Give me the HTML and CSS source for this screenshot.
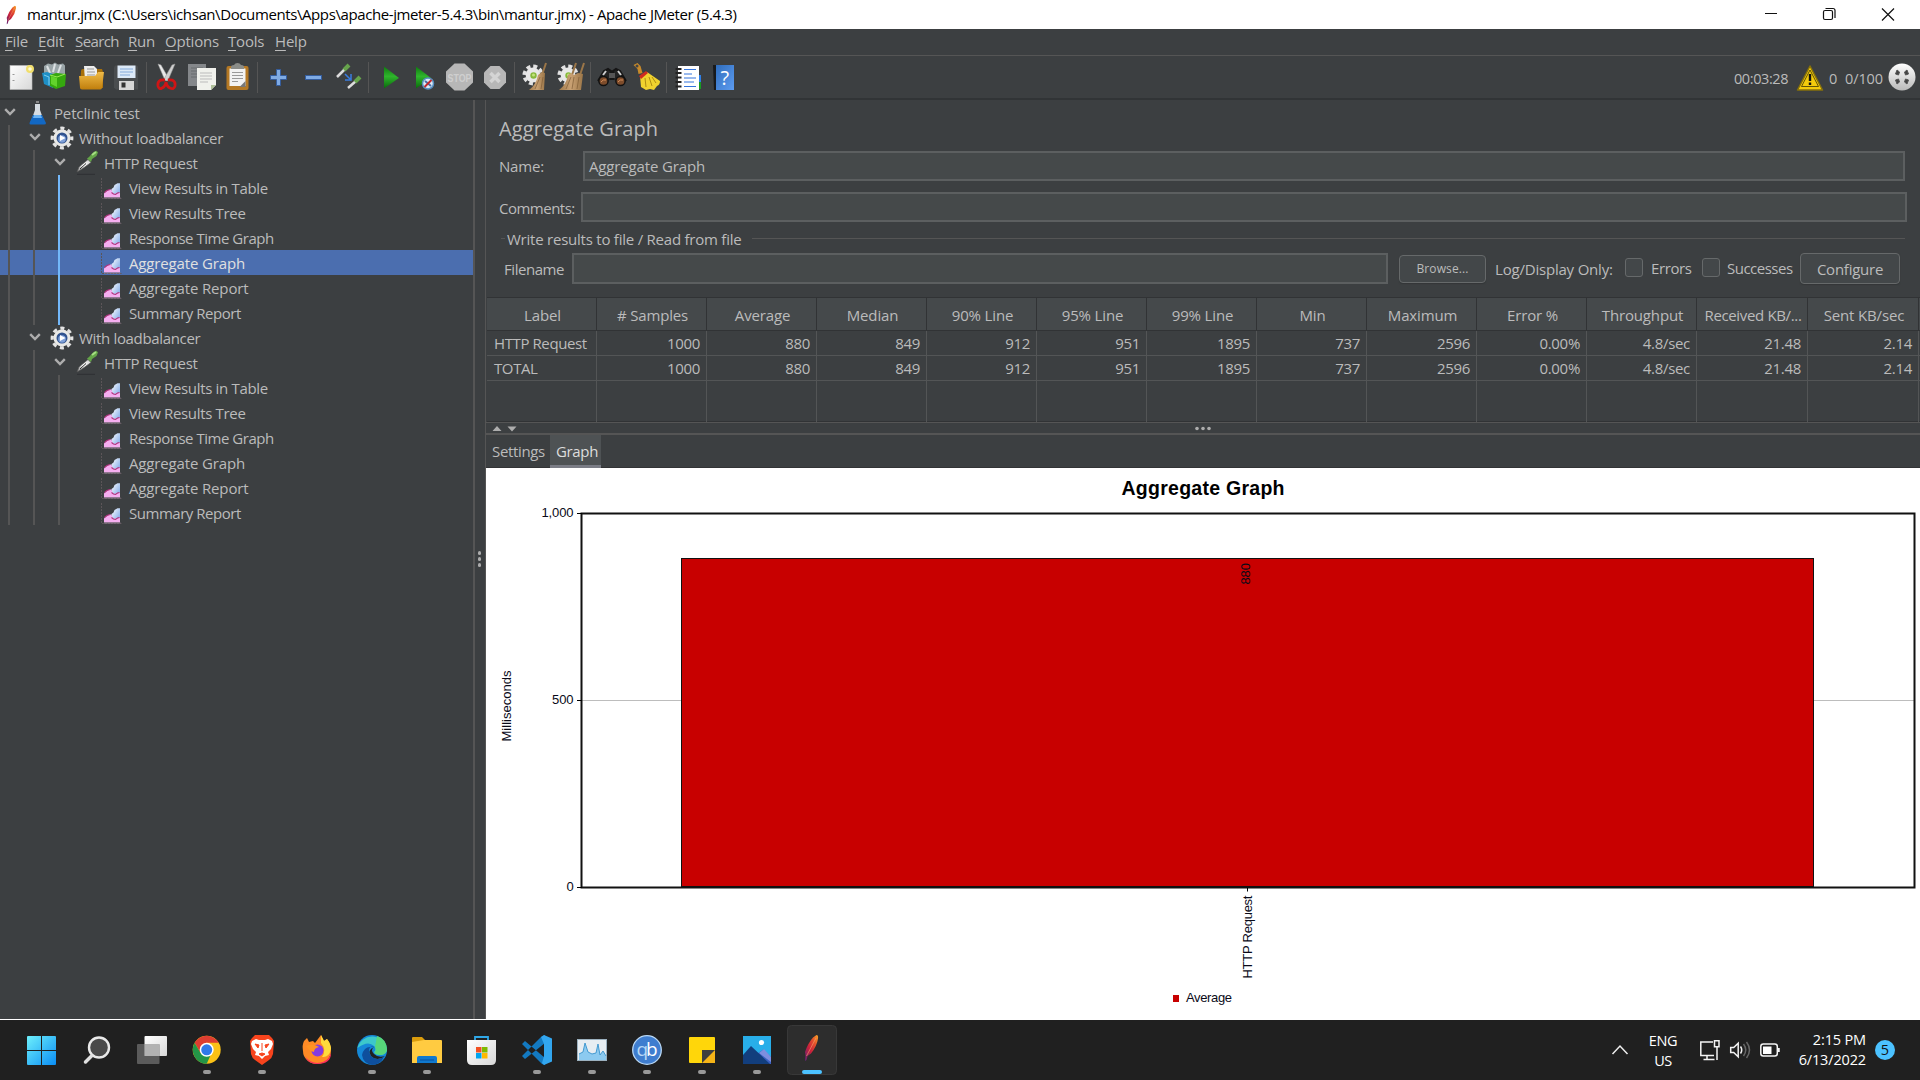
FILE: index.html
```html
<!DOCTYPE html>
<html lang="en">
<head>
<meta charset="utf-8">
<title>Apache JMeter</title>
<link rel="stylesheet" href="styles.css">
</head>
<body>
<svg class="defs" width="0" height="0">
  <defs>
    <linearGradient id="blueGrad" x1="0" y1="0" x2="1" y2="1"><stop offset="0" stop-color="#6ef0fb"/><stop offset="1" stop-color="#0a8df5"/></linearGradient>
    <linearGradient id="paper" x1="0" y1="0" x2="1" y2="1"><stop offset="0" stop-color="#fff"/><stop offset="1" stop-color="#d8d8d8"/></linearGradient>
    <linearGradient id="gold" x1="0" y1="0" x2="0" y2="1"><stop offset="0" stop-color="#f0bb48"/><stop offset="1" stop-color="#c07e0c"/></linearGradient>
    <linearGradient id="play" x1="0" y1="0" x2="0" y2="1"><stop offset="0" stop-color="#0f7a10"/><stop offset=".45" stop-color="#2fb52c"/><stop offset="1" stop-color="#0a6a0c"/></linearGradient>
    <linearGradient id="feather" x1="1" y1="0" x2="0" y2="1"><stop offset="0" stop-color="#f8a526"/><stop offset=".3" stop-color="#e4502c"/><stop offset=".6" stop-color="#c8203c"/><stop offset="1" stop-color="#5e2378"/></linearGradient>
    <linearGradient id="pipe" x1="0" y1="1" x2="1" y2="0"><stop offset="0" stop-color="#777"/><stop offset=".5" stop-color="#fff"/><stop offset="1" stop-color="#ccc"/></linearGradient>
    <linearGradient id="straw" x1="0" y1="0" x2="1" y2="0"><stop offset="0" stop-color="#a07a4c"/><stop offset=".5" stop-color="#c9a173"/><stop offset="1" stop-color="#9b7648"/></linearGradient>
    <linearGradient id="book" x1="0" y1="0" x2="1" y2="1"><stop offset="0" stop-color="#2f6dbd"/><stop offset="1" stop-color="#5d9cf0"/></linearGradient>
    <linearGradient id="ball" x1="0" y1="0" x2="0" y2="1"><stop offset="0" stop-color="#fff"/><stop offset="1" stop-color="#b9b9b9"/></linearGradient>
    <linearGradient id="area" x1="0" y1="0" x2="1" y2="1"><stop offset="0" stop-color="#fff"/><stop offset="1" stop-color="#6f9fe6"/></linearGradient>
    <symbol id="arrow" viewBox="0 0 12 25"><path d="M1.2 9.2 6 14 10.8 9.2" fill="none" stroke="#adadad" stroke-width="2.4"/></symbol>
    <symbol id="leaf" viewBox="0 0 21 25">
      <path d="M.5 3v20.500h20" fill="none" stroke="#5b5558" stroke-dasharray="2 1"/>
      <path d="M10.500 20v-6l2-1.500 1-2.500 3-1.800h2.500V22z" fill="url(#area)"/>
      <path d="M3 22.500v-4l2.500-2.500 3-1.500h2l1 3.500 2 1.500 2-2 1 1 2.500-1v5z" fill="#f5aef0"/>
      <path d="M3.500 17.500l2.500-2 3-1M10.500 17.500l2 1.500 2 .5 2-1.500 2-.5" fill="none" stroke="#b0317b" stroke-width="1.100"/>
      <path d="M3 23h16.500" stroke="#8d7a8c"/>
    </symbol>
    <symbol id="gear" viewBox="0 0 24 25">
      <circle cx="12" cy="13" r="9.800" fill="none" stroke="#e4e4e4" stroke-width="3.200" stroke-dasharray="4.100 3.600" stroke-dashoffset="2"/>
      <circle cx="12" cy="13" r="8.500" fill="#e9e9e6"/><circle cx="12" cy="13" r="5.500" fill="#31538e"/><circle cx="12" cy="14" r="3.800" fill="#7fa0d8"/>
      <path d="M10 10l5.500 3-5.500 3z" fill="#fff"/>
    </symbol>
    <symbol id="dropper" viewBox="0 0 24 25">
      <path d="M2 22 4 17 13 9.500l3 3L7 19z" fill="url(#pipe)" stroke="#565656" stroke-width=".7"/>
      <path d="M5 19 11 13.500" stroke="#333" stroke-width="1"/>
      <path d="M12 8.500l2-1.500 4.500-5 3-1.300L23 2.500 21.500 6 17 9l-1 3z" fill="#64a548"/><path d="M17 5l4-3" stroke="#a8df85" stroke-width="1.800"/>
      <path d="M2 24.300h18" stroke="#2d3032"/>
    </symbol>
    <symbol id="jm" viewBox="0 0 16 28">
      <path d="M13.500 1Q15.500 1 15 4.500 14 12 8 19.500L4.500 22 3.500 26 2 27 2.500 21.500 2 18Q5 9 10 3.500z" fill="url(#feather)"/>
      <path d="M13 4 3.500 22" stroke="#f7a36c" stroke-width=".6"/>
    </symbol>
    <symbol id="winbroom" viewBox="0 0 25 28">
      <circle cx="11" cy="12" r="8.700" fill="none" stroke="#e2e2e2" stroke-width="3.600" stroke-dasharray="4 2.830"/>
      <circle cx="11" cy="12" r="7.400" fill="#e8e8e8"/><circle cx="11.500" cy="12.500" r="3.200" fill="#87b93c"/><circle cx="11.500" cy="12" r="1.500" fill="#c2e37b"/>
    </symbol>
  </defs>
</svg>

<div class="screen">
  <header class="titlebar">
    <svg class="app-icon" viewBox="0 0 16 28"><use href="#jm"/></svg>
    <span class="title">mantur.jmx (C:\Users\ichsan\Documents\Apps\apache-jmeter-5.4.3\bin\mantur.jmx) - Apache JMeter (5.4.3)</span>
    <svg class="win-controls" width="170" height="29" viewBox="1750 0 170 29" fill="none" stroke="#111" stroke-width="1.200">
      <path d="M1765 13.500h12M1882 8.500l12 12M1894 8.500l-12 12"/>
      <rect x="1823.500" y="10.500" width="9" height="9" rx="1.500"/><path d="M1825.500 8.500h7.500q2 0 2 2v7.500"/>
    </svg>
  </header>

  <nav class="menubar">
    <span><u>F</u>ile</span><span><u>E</u>dit</span><span class="search"><u>S</u>earch</span><span><u>R</u>un</span><span><u>O</u>ptions</span><span><u>T</u>ools</span><span><u>H</u>elp</span>
  </nav>

  <div class="toolbar">
    <svg viewBox="4 60 35 36"><rect x="10" y="65.500" width="22" height="24" fill="url(#paper)" stroke="#bbb" stroke-width=".6"/><path d="M12.500 74.500h2M12.500 80.500h2" stroke="#999"/><circle cx="30" cy="69" r="4" fill="#f1de6b"/><circle cx="30" cy="69" r="1.800" fill="#fffbd5"/></svg>
    <svg viewBox="39 60 35 36"><path d="M44 66l4-2.500 4 1 3-2 3 2 5-1 2 2v10H44z" fill="#9aa5a8"/><path d="M47 66l3 7M55 64l-2 8M61 65l-3 8" stroke="#dce1e3" stroke-width="2"/><path d="M42 73l5-1 6 2v14l-9-4z" fill="#1e8fc6"/><path d="M44 75l5 2v8" fill="none" stroke="#7fd0f0"/><path d="M50 75l6-2 10 1-1 12-9 3-6-3z" fill="#35a80e"/><path d="M50 75l7 2 8-3" fill="none" stroke="#9bea55"/><path d="M51 76l6 2v9l-6-3z" fill="#62d32c"/></svg>
    <svg viewBox="74 60 35 36"><path d="M81 71q0-2 2-2h19l1 3v16H80z" fill="#a8700b"/><path d="M84 66h10l3 3v12H85z" fill="#eee"/><path d="M87 69h7M87 72h8M87 75h8" stroke="#999"/><path d="M79 76h16l3-4h6l-2 16q-.5 1.500-2 1.500H82q-2 0-2-2z" fill="url(#gold)"/></svg>
    <svg viewBox="109 60 35 36"><path d="M115 65.500h22l1 1v23h-22l-2-2v-20z" fill="#4a4d4f"/><path d="M117.500 65.500h18V78h-18z" fill="#dce9f7"/><path d="M120 69h13M120 72h13M120 75h10" stroke="#84aada"/><path d="M119 81h15v9h-15z" fill="#d6d6d6"/><path d="M121.500 82.500h4v5h-4z" fill="#333"/></svg>
    <i class="sep"></i>
    <svg viewBox="150 60 35 36"><path d="M158 64l3 1 8 14-2 2-3-3z" fill="#e8e8e8" stroke="#9b9b9b" stroke-width=".5"/><path d="M175 64l-3 1-8 14 2 2 3-3z" fill="#cfcfcf" stroke="#999" stroke-width=".5"/><path d="M165 80q-8-1-7 6 1 4 4 2 3-1 4-6 1 5 4 6 4 2 5-2 1-7-7-6" fill="none" stroke="#cf1515" stroke-width="2.800"/></svg>
    <svg viewBox="185 60 35 36"><path d="M188 64h18v22h-18z" fill="#84878a"/><path d="M191 68h12M191 71h12M191 74h8M191 77h8" stroke="#696c6e"/><path d="M197 68h19v17l-5 5h-14z" fill="#f0f1ec"/><path d="M200 73h12M200 76h12M200 79h12M200 82h8" stroke="#bbb"/><path d="M216 85h-5v5z" fill="#aebf98"/></svg>
    <svg viewBox="220 60 35 36"><rect x="226.500" y="66" width="22" height="24" rx="2" fill="#b47824"/><path d="M229.500 68.500h16V86h-16z" fill="#f2f2f2"/><path d="M231 69v-2q0-2 3-2 1-2 3.500-2t3.500 2q3 0 3 2v2z" fill="#8a8c88"/><path d="M232 72.500h11M232 75.500h11M232 78.500h11M232 81.500h6" stroke="#999"/><path d="M245.500 81v6h-6z" fill="#777"/></svg>
    <i class="sep"></i>
    <svg viewBox="261 60 35 36"><path d="M276.500 69.500h4v6h6v4h-6v6h-4v-6h-6v-4h6z" fill="#7fabe4" stroke="#345d9e"/></svg>
    <svg viewBox="296 60 35 36"><rect x="305.500" y="75.500" width="16" height="4" fill="#7fabe4" stroke="#345d9e"/></svg>
    <svg viewBox="331 60 35 36"><path d="M337 77l8-8" stroke="#ddd" stroke-width="2.500"/><path d="M344 70l5-5" stroke="#66a34c" stroke-width="4"/><path d="M348 88l8-7" stroke="#ddd" stroke-width="2.500"/><path d="M355 82l5-5" stroke="#66a34c" stroke-width="4"/><path d="M345 74l5 5M351 74v6h-6" fill="none" stroke="#3a7de0" stroke-width="1.500"/></svg>
    <i class="sep"></i>
    <svg viewBox="372 60 35 36"><path d="M384 66.500 399 78 384 88.500z" fill="url(#play)"/></svg>
    <svg viewBox="407 60 35 36"><path d="M416 66.500 431 78 416 88.500z" fill="url(#play)"/><circle cx="428" cy="83.500" r="5.500" fill="#dceaf6" stroke="#578ec0" stroke-width="1.500"/><path d="M425 81l6 5" stroke="#4770ad" stroke-width="2"/><path d="M424.500 87l7-7" stroke="#c2282d" stroke-width="2"/></svg>
    <svg viewBox="442 60 35 36"><path d="M454.500 63.500h10l8.500 8v11l-8.500 8h-10l-8.500-8v-11z" fill="#b7b7b7"/><text x="447.500" y="81.500" textLength="24" lengthAdjust="spacingAndGlyphs" class="stop-text">STOP</text></svg>
    <svg viewBox="477 60 35 36"><path d="M490.500 66h9l6.500 6.500v10l-6.500 6.500h-9l-6.500-6.500v-10z" fill="#b7b7b7"/><path d="M490.500 73l9 9M499.500 73l-9 9" stroke="#d4d4d4" stroke-width="3.500"/></svg>
    <i class="sep"></i>
    <svg viewBox="518 60 35 36"><use href="#winbroom" x="522" y="63" width="25" height="28"/><path d="M546 63 542 75" stroke="#9b7648" stroke-width="2"/><path d="M538 75l4-3 3 1-1 17h-15q7-5 9-15z" fill="url(#straw)"/><path d="M540 77l-5 12M543 77l-2 12" stroke="#7f5d36" stroke-width=".7"/></svg>
    <svg viewBox="553 60 35 36"><use href="#winbroom" x="557" y="63" width="25" height="28"/><path d="M576 63 572 75M584 63l-4 12" stroke="#9b7648" stroke-width="2"/><path d="M568 75l3-2 3 2 4-2 5 1-2 16h-22q7-5 9-15z" fill="url(#straw)"/><path d="M571 77l-5 12M574 77l-2 12M579 77l-2 12" stroke="#7f5d36" stroke-width=".7"/></svg>
    <i class="sep"></i>
    <svg viewBox="594 60 35 36"><path d="M598 81l6-10 4-2 3 2v9M626 81l-6-10-4-2-3 2v9" fill="#232323" stroke="#151515" stroke-width="2"/><path d="M603 75l3-4M621 75l-3-4" stroke="#ccc" stroke-width="2"/><path d="M609 73h6v5h-6z" fill="#555"/><circle cx="603.500" cy="81" r="4.600" fill="#7d4c2b" stroke="#111" stroke-width="1.500"/><circle cx="620.500" cy="81" r="4.600" fill="#7d4c2b" stroke="#111" stroke-width="1.500"/><path d="M601 82q2-3 5-2M618 82q2-3 5-2" fill="none" stroke="#d48d5b"/></svg>
    <svg viewBox="629 60 35 36"><path d="M633.500 65l4-2 3 3 2 7-4 1-1-5z" fill="#c78a2a"/><circle cx="637" cy="66" r="1.500" fill="#444"/><path d="M640 76l7-4 13 9q0 4-3 5l-3 4-4-1-4 1-5-3z" fill="#f0d22e"/><path d="M639 76l7-5 2 2-7 6z" fill="#cf2b20"/><path d="M645 78l1 9M649 77l3 9M652 77l4 6" stroke="#ae8c12"/></svg>
    <i class="sep"></i>
    <svg viewBox="670 60 35 36"><path d="M698 75h3v7h-3z" fill="#2e7fe8"/><path d="M698 82h3v7h-3z" fill="#189b22"/><rect x="678" y="66" width="21" height="24" fill="#fff"/><path d="M675.500 69h6M675.500 73h6M675.500 77.500h6M675.500 82h6M675.500 86.500h6" stroke="#222" stroke-width="1.800"/><path d="M684 69.500h12M684 74h8M684 78h12M684 82h10M684 86.500h12" stroke="#3475dd"/></svg>
    <svg viewBox="705 60 35 36"><path d="M713 65h3v25h-2z" fill="#17191c"/><path d="M716 65h18v25h-18z" fill="url(#book)"/><text x="720.500" y="85" class="help-text">?</text></svg>
    <div class="status">
      <span>00:03:28</span>
      <svg class="warn" viewBox="1797 69 28 28"><path d="M1811 71 1823.500 95h-25z" fill="#f4cb0c" stroke="#85700b" stroke-width="1.500" stroke-linejoin="round"/><path d="M1811 75l8.500 16.500h-17z" fill="none" stroke="#3c3508" stroke-width=".8"/><path d="M1811 79v7M1811 87.500v2.500" stroke="#111" stroke-width="2.400"/></svg>
      <span>0</span><span class="threads">0/100</span>
      <svg class="ball" viewBox="1888 67 30 30"><circle cx="1903" cy="82" r="13.500" fill="url(#ball)"/><path d="M1898 75l2.500 2-1 3-3-1zM1908 75l-2.500 2 1 3 3-1zM1898 89l2.500-2-1-3-3 1zM1908 89l-2.500-2 1-3 3 1z" fill="#444" stroke="#555"/></svg>
    </div>
  </div>

  <main class="workspace">
    <aside class="tree">
      <div class="row l0"><svg class="arrow"><use href="#arrow"/></svg><svg class="ico flask" viewBox="0 0 20 25"><path d="M9 2h3" stroke="#888" stroke-width="2"/><path d="M8 4h5v6l5 14H3L8 10z" fill="#d7dde3"/><path d="M6 15h9l4 8q0 1.500-2 1.500H4q-2 0-1.500-1.500z" fill="#1268c4"/><path d="M7 15h7l1 3H6z" fill="#6ab2f2"/></svg><span class="wide">Petclinic test</span></div>
      <div class="row l1 g1"><svg class="arrow"><use href="#arrow"/></svg><svg class="ico"><use href="#gear"/></svg><span>Without loadbalancer</span></div>
      <div class="row l2 g2"><svg class="arrow"><use href="#arrow"/></svg><svg class="ico"><use href="#dropper"/></svg><span>HTTP Request</span></div>
      <div class="row l3 g3 hot"><svg class="leaf"><use href="#leaf"/></svg><span>View Results in Table</span></div>
      <div class="row l3 g3 hot"><svg class="leaf"><use href="#leaf"/></svg><span>View Results Tree</span></div>
      <div class="row l3 g3 hot"><svg class="leaf"><use href="#leaf"/></svg><span class="narrow">Response Time Graph</span></div>
      <div class="row l3 g3 hot selected"><svg class="leaf"><use href="#leaf"/></svg><span class="wide">Aggregate Graph</span></div>
      <div class="row l3 g3 hot"><svg class="leaf"><use href="#leaf"/></svg><span class="wide">Aggregate Report</span></div>
      <div class="row l3 g3 hot"><svg class="leaf"><use href="#leaf"/></svg><span class="narrow">Summary Report</span></div>
      <div class="row l1 g1"><svg class="arrow"><use href="#arrow"/></svg><svg class="ico"><use href="#gear"/></svg><span>With loadbalancer</span></div>
      <div class="row l2 g2"><svg class="arrow"><use href="#arrow"/></svg><svg class="ico"><use href="#dropper"/></svg><span>HTTP Request</span></div>
      <div class="row l3 g3"><svg class="leaf"><use href="#leaf"/></svg><span>View Results in Table</span></div>
      <div class="row l3 g3"><svg class="leaf"><use href="#leaf"/></svg><span>View Results Tree</span></div>
      <div class="row l3 g3"><svg class="leaf"><use href="#leaf"/></svg><span class="narrow">Response Time Graph</span></div>
      <div class="row l3 g3"><svg class="leaf"><use href="#leaf"/></svg><span class="wide">Aggregate Graph</span></div>
      <div class="row l3 g3"><svg class="leaf"><use href="#leaf"/></svg><span class="wide">Aggregate Report</span></div>
      <div class="row l3 g3"><svg class="leaf"><use href="#leaf"/></svg><span class="narrow">Summary Report</span></div>
    </aside>
    <div class="vsplit"><i></i><i></i><i></i></div>

    <section class="panel">
      <h1>Aggregate Graph</h1>
      <div class="field name"><label>Name:</label><div class="input">Aggregate Graph</div></div>
      <div class="field comments"><label>Comments:</label><div class="input"></div></div>
      <div class="legend-line"><span>Write results to file / Read from file</span></div>
      <div class="file-row">
        <label>Filename</label><div class="input"></div>
        <div class="btn browse">Browse...</div>
        <span class="log">Log/Display Only:</span>
        <i class="check"></i><span class="errors">Errors</span>
        <i class="check"></i><span class="succ">Successes</span>
        <div class="btn configure">Configure</div>
      </div>
      <div class="table">
        <div class="tr th"><span>Label</span><span># Samples</span><span>Average</span><span>Median</span><span>90% Line</span><span>95% Line</span><span>99% Line</span><span>Min</span><span>Maximum</span><span>Error %</span><span>Throughput</span><span class="tight">Received KB/...</span><span>Sent KB/sec</span></div>
        <div class="tr"><span>HTTP Request</span><span>1000</span><span>880</span><span>849</span><span>912</span><span>951</span><span>1895</span><span>737</span><span>2596</span><span>0.00%</span><span>4.8/sec</span><span>21.48</span><span>2.14</span></div>
        <div class="tr"><span>TOTAL</span><span>1000</span><span>880</span><span>849</span><span>912</span><span>951</span><span>1895</span><span>737</span><span>2596</span><span>0.00%</span><span>4.8/sec</span><span>21.48</span><span>2.14</span></div>
        <div class="tr blank"><span></span><span></span><span></span><span></span><span></span><span></span><span></span><span></span><span></span><span></span><span></span><span></span><span></span></div>
      </div>
      <div class="hsplit">
        <svg width="1434" height="10" viewBox="486 423 1434 10"><path d="M492.500 431h9l-4.500-5zM507.500 426.500h9l-4.500 5z" fill="#adadad"/><g fill="#adadad"><circle cx="1197" cy="428.500" r="1.800"/><circle cx="1203" cy="428.500" r="1.800"/><circle cx="1209" cy="428.500" r="1.800"/></g></svg>
      </div>
      <div class="tabs"><span>Settings</span><span class="active">Graph</span></div>
      <svg class="chart" width="1434" height="551" viewBox="486 468 1434 551">
        <text x="1121.500" y="494.500" textLength="163" class="chart-title">Aggregate Graph</text>
        <path d="M582 700.500H1914" stroke="#bdbdbd"/>
        <rect x="681.500" y="558.500" width="1132" height="328" fill="#c80000" stroke="#111"/>
        <rect x="581.500" y="513.500" width="1333" height="374" fill="none" stroke="#111" stroke-width="2"/>
        <path d="M577 513.500h5M577 700.500h5M577 887.500h5M1247.500 888v3.500" stroke="#000"/>
        <g class="chart-label">
          <text x="541.500" y="517" textLength="32">1,000</text>
          <text x="552" y="704" textLength="21.500">500</text>
          <text x="566.500" y="891">0</text>
          <text transform="translate(511 741.500) rotate(-90)" textLength="71">Milliseconds</text>
          <text transform="translate(1252 978.500) rotate(-90)" textLength="83">HTTP Request</text>
          <text transform="translate(1249.500 584.500) rotate(-90)" textLength="21.500">880</text>
          <text x="1186" y="1002" textLength="46">Average</text>
        </g>
        <rect x="1173" y="995" width="6" height="7" fill="#c80000"/>
      </svg>
    </section>
  </main>

  <footer class="taskbar">
    <div class="apps">
      <svg viewBox="14 1020 55 60"><path d="M27 1037q0-1 1-1h13v14H27zM42 1036h13q1 0 1 1v13H42zM27 1051h14v14H28q-1 0-1-1zM42 1051h14v13q0 1-1 1H42z" fill="url(#blueGrad)"/></svg>
      <svg viewBox="69 1020 55 60"><circle cx="99" cy="1047.500" r="10" fill="#4a4a4a" stroke="#e9e9e9" stroke-width="2.400"/><path d="M85.500 1062l6-6" stroke="#e0e0e0" stroke-width="3.500" stroke-linecap="round"/></svg>
      <svg viewBox="124 1020 55 60"><rect x="144.500" y="1036" width="22.500" height="20" rx="1" fill="url(#paper)"/><rect x="137" y="1044" width="22.500" height="20" rx="1" fill="#666" opacity=".85"/><path d="M144.500 1044h15v12h-15z" fill="#b2b2b2"/></svg>
      <svg viewBox="179 1020 55 60"><circle cx="206.700" cy="1049.800" r="14" fill="#fbc116"/><path d="M206.700 1042.800h12.100A14 14 0 0 0 194.600 1042.800l6.100 10.500z" fill="#dd3d31"/><path d="M194.600 1042.800l6.100 10.500 9.500 2.800-3.500 7.700A14 14 0 0 1 194.600 1042.800z" fill="#249547"/><circle cx="206.700" cy="1049.800" r="7" fill="#fff"/><circle cx="206.700" cy="1049.800" r="5.500" fill="#3079e9"/><rect x="203" y="1070" width="8" height="4" rx="2" fill="#999"/></svg>
      <svg viewBox="234 1020 55 60"><path d="M255 1035h14l3 3 2 3-1 13q-1 4-4 6l-7 5-7-5q-3-2-4-6l-1-13 2-3z" fill="#f8441d"/><path d="M252 1041l4-2 3 1h6l3-1 4 2 1 3-2 5-3 3 1 3-4 1-3 3-3-3-4-1 1-3-3-3-2-5z" fill="#fff"/><path d="M255 1044l4 1-1 3zM269 1044l-4 1 1 3zM259 1054l3-1 3 1-3 2zM262 1043v8" fill="#f8441d" stroke="#f8441d"/><rect x="258" y="1070" width="8" height="4" rx="2" fill="#999"/></svg>
      <svg viewBox="289 1020 55 60"><path d="M304 1041l3-3 2 4 4-1 2 2 3-4 3-4 3 6 3-2q4 5 4 12a14 13 0 0 1-28 0q-1-6 1-10z" fill="#ff8a25"/><path d="M305 1056a14 13 0 0 0 26-3q0 11-14 11-9 0-12-8z" fill="#ff2e5b"/><path d="M321 1035l3 6 3-2q4 5 4 10-2 9-9 8 5-7-1-14z" fill="#ffdb3c"/><circle cx="317.500" cy="1050.500" r="6" fill="#843be0"/><path d="M306 1046q7-3 13 1-5 1-5 5-5-1-8-6z" fill="#ff9423"/></svg>
      <svg viewBox="344 1020 55 60"><circle cx="372" cy="1050" r="15" fill="#1588d7"/><path d="M357.500 1048A15 15 0 0 1 387 1050q-1 5-7 5-5 0-6-3 3-3 0-6-6-6-16.500 2z" fill="#3dc8ca"/><path d="M377 1036q10 3 10 14-1 5-7 5-4 0-6-2 3-2 1-6z" fill="#57d77a"/><path d="M375 1047q-6-2-6 4 1 8 10 8l5-2q-4 8-12 8-9-2-10-10 2-8 8-8z" fill="#0e4f9d"/><path d="M374 1047q-4 3 0 7 4 4 11 2-8 6-14 0-4-6 3-9z" fill="#202020"/><rect x="368" y="1070" width="8" height="4" rx="2" fill="#999"/></svg>
      <svg viewBox="399 1020 55 60"><path d="M412 1038q0-1 1-1h9l3 3v5h-13z" fill="#da9c0c"/><path d="M412 1042l12-2h17q1 0 1 1v22h-30z" fill="#ffcb41"/><path d="M417 1063v-5q0-2 2-2h16q2 0 2 2v5z" fill="#1079ce"/><path d="M420 1060h14" stroke="#07509e"/><rect x="423" y="1070" width="8" height="4" rx="2" fill="#999"/></svg>
      <svg viewBox="454 1020 55 60"><path d="M475 1041v-4h13v4" fill="none" stroke="#2fa8e8" stroke-width="1.800"/><path d="M467 1040h29v20q0 5-5 5h-19q-5 0-5-5z" fill="url(#paper)"/><path d="M476 1047h5.500v5.500H476z" fill="#f25022"/><path d="M482 1047h5.500v5.500H482z" fill="#7fba00"/><path d="M476 1053h5.500v5.500H476z" fill="#00a4ef"/><path d="M482 1053h5.500v5.500H482z" fill="#ffb900"/></svg>
      <svg viewBox="509 1020 55 60"><path d="M522 1044l3-3 20 17v7l-3-1zM522 1056l3 3 20-16v-8l-4 2z" fill="#1379c0"/><path d="M544 1035l8 3.500v23l-8 3.500-2-2 2-7v-12l-3-7z" fill="#32a6ef"/><rect x="533" y="1070" width="8" height="4" rx="2" fill="#999"/></svg>
      <svg viewBox="564 1020 55 60"><rect x="577.500" y="1039.500" width="29" height="21" fill="#e7edf2" stroke="#9cb1bf"/><path d="M579 1060v-6l4-2 2-9 3 9 4 2 4-1 2-9 2 11 3-4 3 5v4z" fill="#8ccaf0"/><path d="M579 1054l4-2 2-9 3 9 4 2 4-1 2-9 2 11 3-4 3 5" fill="none" stroke="#449ad1"/><rect x="588" y="1070" width="8" height="4" rx="2" fill="#999"/></svg>
      <svg viewBox="619 1020 55 60"><circle cx="647" cy="1050" r="14.300" fill="#3f7dcf" stroke="#b9d8f5" stroke-width="1.300"/><text x="636.500" y="1055.500" textLength="21" class="qb">q<tspan fill="#fff">b</tspan></text><rect x="643" y="1070" width="8" height="4" rx="2" fill="#999"/></svg>
      <svg viewBox="674 1020 55 60"><rect x="689" y="1037" width="26" height="26" rx="1" fill="#ffd60a"/><path d="M702 1063v-13h13v13z" fill="#f5b417"/><path d="M702 1050h13l-13 13z" fill="#3e3e3e"/><rect x="698" y="1070" width="8" height="4" rx="2" fill="#999"/></svg>
      <svg viewBox="729 1020 55 60"><path d="M743 1036h28v28h-28z" fill="#28aee9"/><path d="M757 1054l7-5 7 7v8h-14z" fill="#3b62c4"/><path d="M757 1053l6-4 8 8v-14z" fill="#28aee9"/><path d="M759 1053l5-4 7 8v5z" fill="#7d8fdf"/><path d="M743 1055l8-9 19 18h-27z" fill="#123e7d"/><circle cx="761.500" cy="1042.500" r="2.600" fill="#fff"/><rect x="753" y="1070" width="8" height="4" rx="2" fill="#999"/></svg>
      <svg viewBox="784 1020 55 60"><rect x="787.500" y="1025.500" width="49" height="49" rx="4" fill="#2d2d2d" stroke="#383838"/><use href="#jm" x="803" y="1034" width="16" height="28"/><rect x="802" y="1070" width="20" height="4" rx="2" fill="#4cc2ff"/></svg>
    </div>
    <div class="tray">
      <svg class="chev" viewBox="1608 1040 24 20"><path d="M1612.500 1054l7.500-8 7.500 8" fill="none" stroke="#eee" stroke-width="1.500"/></svg>
      <div class="lang">ENG<br>US</div>
      <svg class="sys" viewBox="1696 1035 88 30" fill="none" stroke="#f4f4f4" stroke-width="1.500">
        <path d="M1713 1042h-12.200v13.500h13.200M1707 1056v3M1703.500 1059.500h11M1714.500 1040.800h4.500v6h-4.500zM1717 1047v13"/>
        <path d="M1730.700 1047.500h3l4.500-4.300v13.500l-4.500-4.200h-3zM1740.500 1046.500q2.500 3.500 0 7"/><path d="M1743.500 1044q4.500 6 0 12M1746.500 1042q6 8 0 16" stroke="#666"/>
        <rect x="1760.800" y="1044" width="16.500" height="12" rx="2.500"/><path d="M1763 1046.500h8.500v7.500h-8.500z" fill="#fff" stroke="none"/><path d="M1778.500 1048v4" stroke-width="2.500"/>
      </svg>
      <div class="clock">2:15 PM<br>6/13/2022</div>
      <span class="badge">5</span>
    </div>
  </footer>
</div>
</body>
</html>
```
FILE: styles.css
```css
* { box-sizing: border-box; }
body { margin: 0; overflow: hidden; font: 15px/25px "Open Sans", "Noto Sans", sans-serif; color: #bbb; background: #3c3f41; }
.defs { position: absolute; }
.screen { width: 1920px; height: 1080px; display: flex; flex-direction: column; }
svg { display: block; flex: none; }

.titlebar { height: 29px; flex: none; background: #fff; color: #000; display: flex; align-items: center; }
.app-icon { width: 12px; height: 20px; margin-left: 5px; }
.title { margin: 0 auto 0 10px; letter-spacing: -.4px; white-space: nowrap; }

.menubar { height: 27px; flex: none; border-bottom: 1px solid #555; display: grid; grid-template-columns: 33px 37px 53px 37px 63px 47px 60px; padding-left: 5px; line-height: 25px; letter-spacing: -.2px; }
.menubar .search { letter-spacing: -.6px; }
.menubar u { text-decoration-thickness: 1px; text-underline-offset: 3px; }

.toolbar { height: 44px; flex: none; border-bottom: 2px solid #313436; display: flex; padding: 4px 3px 0 4px; }
.toolbar > svg { width: 35px; height: 36px; }
.sep { width: 1px; height: 31px; margin: 2px 3px 0 2px; background: #555; flex: none; }
.stop-text { font: bold 10px "Liberation Sans", sans-serif; fill: #cfcfcf; }
.help-text { font: 20px "Open Sans", sans-serif; fill: #fff; }
.status { margin-left: auto; display: flex; align-items: center; height: 36px; font-size: 14.500px; letter-spacing: -.4px; }
.warn { width: 28px; height: 28px; margin: 0 5px 0 8px; }
.threads { margin: 0 4px 0 8px; letter-spacing: -.1px; }
.ball { width: 30px; height: 30px; margin-top: 6px; margin-bottom: 8px; }

.workspace { height: 919px; flex: none; display: flex; }
.tree { width: 475px; border-right: 2px solid #555; }
.row { height: 25px; display: flex; align-items: center; white-space: nowrap; background-repeat: no-repeat; }
.row span { line-height: 26px; letter-spacing: -.33px; }
.row .wide { letter-spacing: -.15px; }
.row .narrow { letter-spacing: -.47px; }
.arrow { width: 12px; height: 25px; }
.ico { width: 24px; height: 25px; margin: 0 5px 0 9px; }
.flask { width: 20px; margin: 0 7px 0 11px; }
.leaf { width: 21px; height: 25px; margin-right: 7px; }
.l0 { padding-left: 4px; }
.l1 { padding-left: 29px; }
.l2 { padding-left: 54px; }
.l3 { padding-left: 101px; }
.g1, .g2, .g3 { --a: #555; --b: transparent; --c: transparent;
  background-image: linear-gradient(var(--a), var(--a)), linear-gradient(var(--b), var(--b)), linear-gradient(var(--c), var(--c));
  background-size: 2px 25px; background-position: 8px 0, 33px 0, 58px 0; }
.g2, .g3 { --b: #555; }
.g3 { --c: #555; }
.hot { --c: #73b8fa; }
.selected { background-color: #4b6eaf; color: #e0e0e0; }

.vsplit { width: 11px; border-right: 1px solid #555; display: flex; flex-direction: column; align-items: center; gap: 2.500px; padding: 451px 1px 0 0; }
.vsplit i { width: 3.500px; height: 3.500px; border-radius: 50%; background: #adadad; }

.panel { width: 1434px; display: flex; flex-direction: column; }
h1 { margin: 14px 0 0 13px; height: 37px; font-size: 20px; letter-spacing: .1px; font-weight: 400; line-height: 29px; }
.input { background: #45494a; border: 2px solid #5c5f60; flex: 1; }
.field { display: flex; height: 30px; margin-left: 13px; }
.field label { line-height: 30px; letter-spacing: -.2px; }
.name label { width: 84px; }
.name .input { margin-right: 15px; padding-left: 4px; line-height: 26px; letter-spacing: -.15px; }
.comments { margin-top: 11px; }
.comments label { width: 82px; letter-spacing: -.5px; line-height: 32px; }
.comments .input { margin-right: 13px; }
.legend-line { display: flex; align-items: center; gap: 2px; height: 25px; margin: 5px 15px 0; }
.legend-line::before, .legend-line::after { content: ""; height: 1px; background: #555; width: 4px; margin-bottom: 2px; }
.legend-line::after { flex: 1; margin-left: 8px; }
.legend-line span { line-height: 22px; margin-bottom: 1px; letter-spacing: -.23px; }
.file-row { display: flex; align-items: center; height: 31px; margin: 1px 20px 13px 18px; white-space: nowrap; }
.file-row label { width: 68px; letter-spacing: -.45px; padding-top: 1px; }
.file-row .input { height: 31px; }
.btn { border: 1.500px solid #66696a; border-radius: 4px; background: #434749; text-align: center; box-shadow: 0 1px 1px #333638; }
.browse { width: 87px; height: 28px; margin: 0 9px 0 11px; font-size: 12px; letter-spacing: .1px; line-height: 26px; }
.log { width: 130px; letter-spacing: -.2px; padding-top: 1px; }
.check { width: 18px; height: 19px; border: 1.500px solid #66696a; border-radius: 3px; background: #434749; margin-bottom: 2px; }
.errors { width: 51px; margin: 0 0 0 8px; letter-spacing: -.4px; }
.succ { width: 73px; margin: 0 0 0 7px; letter-spacing: -.5px; }
.configure { width: 100px; height: 31px; line-height: 30px; letter-spacing: -.25px; }

.table { border-top: 1px solid #313335; border-bottom: 1px solid #313335; margin-left: 1px; height: 125px; }
.tr { display: grid; grid-template-columns: repeat(11, 110px) 111px 111px; height: 25px; border-bottom: 1px solid #535556; }
.tr span { border-right: 1px solid #535556; text-align: right; padding-right: 6px; line-height: 24px; white-space: nowrap; letter-spacing: -.3px; }
.tr span:first-child { text-align: left; padding-left: 7px; letter-spacing: -.4px; }
.tr.th { height: 33px; background: #45494b; border-color: #313335; }
.th span, .tr.th span:first-child { text-align: center; line-height: 35px; border-color: #313335; padding: 0 0 0 2px; letter-spacing: -.15px; }
.th .tight { letter-spacing: -.35px; }
.tr.blank { height: 41px; border: 0; }
.hsplit { border-top: 1px solid #555; border-bottom: 2px solid #555; height: 13px; }
.tabs { height: 33px; border-bottom: 1px solid #323335; display: flex; line-height: 33px; }
.tabs span { padding: 0 5px 0 6px; width: 64px; height: 33px; letter-spacing: -.35px; }
.tabs .active { width: 51px; background: #4e5254; color: #ddd; border-bottom: 3px solid #7a7c85; }
.chart { background: #fff; }
.chart-title { font: bold 19.500px "Liberation Sans", Arial, sans-serif; fill: #000; }
.chart-label { font: 13px "Liberation Sans", Arial, sans-serif; fill: #0a0a18; }

.taskbar { height: 61px; flex: none; background: #202020; border-top: 1px solid #fff; display: flex; color: #fff; font-size: 14.500px; line-height: 20px; }
.apps { display: flex; padding-left: 14px; }
.apps svg { width: 55px; height: 60px; }
.qb { font: 19px "Open Sans", sans-serif; fill: #b9d8f5; }
.tray { margin-left: auto; display: flex; align-items: center; padding-right: 25px; }
.chev { width: 24px; height: 20px; }
.lang { width: 62px; text-align: center; letter-spacing: -.4px; padding-top: 2px; }
.sys { width: 88px; height: 30px; margin-left: 2px; }
.clock { width: 82px; text-align: right; margin-right: 9px; letter-spacing: -.15px; white-space: nowrap; }
.badge { width: 20px; height: 20px; border-radius: 50%; background: #4cc2ff; color: #111; text-align: center; }
```
